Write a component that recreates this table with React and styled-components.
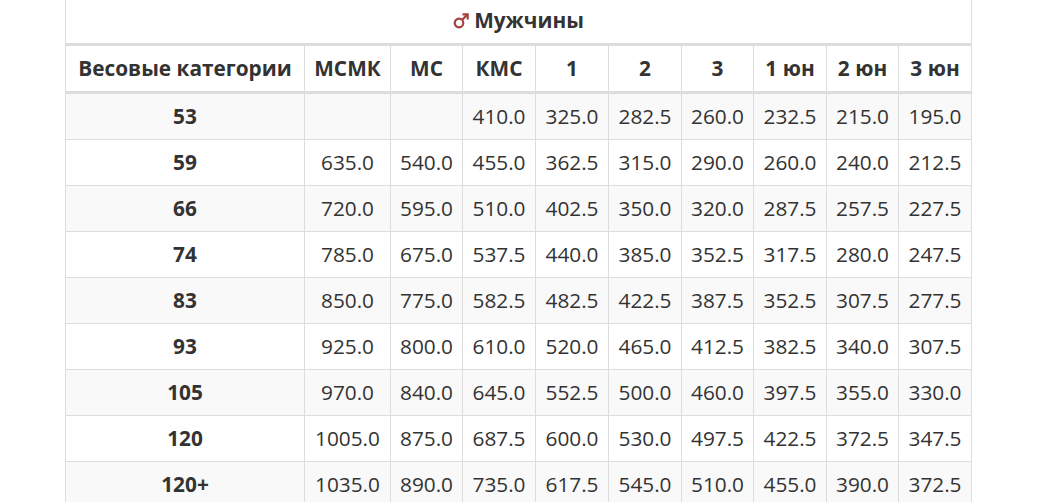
import React from "react";
import styled, { createGlobalStyle } from "styled-components";

const GlobalStyle = createGlobalStyle`
  html, body {
    margin: 0;
    padding: 0;
    background: #fff;
    overflow: hidden;
  }
  body {
    font-family: "Open Sans", "Liberation Sans", sans-serif;
    color: #333;
  }
`;

const Page = styled.div`
  padding-left: 65px;
  margin-top: -3px;
`;

const Table = styled.table`
  width: 907px;
  table-layout: fixed;
  border-collapse: collapse;
  border: 1px solid #ddd;
  font-size: 20.8px;
  line-height: 29px;
`;

const TitleCell = styled.th`
  padding: 8px;
  text-align: center;
  font-weight: 700;
  border: 1px solid #ddd;
  border-bottom: 3px solid #ddd;
`;

const Mars = styled.svg`
  width: 16px;
  height: 16px;
  margin-right: 5px;
  vertical-align: -1px;
`;

const HeadCell = styled.th`
  padding: 8px 2px;
  text-align: center;
  font-weight: 700;
  white-space: nowrap;
  border: 1px solid #ddd;
  border-bottom: 3px solid #ddd;
`;

const Row = styled.tr`
  background: ${(p) => (p.$striped ? "#f9f9f9" : "#fff")};
`;

const Cell = styled.td`
  padding: 8px 2px;
  text-align: center;
  white-space: nowrap;
  font-weight: ${(p) => (p.$bold ? 700 : 400)};
  border: 1px solid #ddd;
`;

const widths = [239, 86, 72, 73, 73, 73, 72, 73, 72, 73];
const headers = ["Весовые категории", "МСМК", "МС", "КМС", "1", "2", "3", "1 юн", "2 юн", "3 юн"];

const rows = [
  ["53", "", "", "410.0", "325.0", "282.5", "260.0", "232.5", "215.0", "195.0"],
  ["59", "635.0", "540.0", "455.0", "362.5", "315.0", "290.0", "260.0", "240.0", "212.5"],
  ["66", "720.0", "595.0", "510.0", "402.5", "350.0", "320.0", "287.5", "257.5", "227.5"],
  ["74", "785.0", "675.0", "537.5", "440.0", "385.0", "352.5", "317.5", "280.0", "247.5"],
  ["83", "850.0", "775.0", "582.5", "482.5", "422.5", "387.5", "352.5", "307.5", "277.5"],
  ["93", "925.0", "800.0", "610.0", "520.0", "465.0", "412.5", "382.5", "340.0", "307.5"],
  ["105", "970.0", "840.0", "645.0", "552.5", "500.0", "460.0", "397.5", "355.0", "330.0"],
  ["120", "1005.0", "875.0", "687.5", "600.0", "530.0", "497.5", "422.5", "372.5", "347.5"],
  ["120+", "1035.0", "890.0", "735.0", "617.5", "545.0", "510.0", "455.0", "390.0", "372.5"],
];

function MarsIcon() {
  return (
    <Mars viewBox="0 0 16 16">
      <circle cx="6" cy="10" r="4.3" fill="none" stroke="#a3413c" strokeWidth="2.2" />
      <path d="M9.2 6.8 L14 2" stroke="#a3413c" strokeWidth="2.2" fill="none" />
      <path d="M9.5 1.3 H14.7 V6.5" stroke="#a3413c" strokeWidth="2.2" fill="none" />
    </Mars>
  );
}

export default function App() {
  return (
    <Page>
      <GlobalStyle />
      <Table>
        <colgroup>
          {widths.map((w, i) => (
            <col key={i} style={{ width: w }} />
          ))}
        </colgroup>
        <thead>
          <tr>
            <TitleCell colSpan={10}>
              <MarsIcon />
              Мужчины
            </TitleCell>
          </tr>
          <tr>
            {headers.map((h) => (
              <HeadCell key={h}>{h}</HeadCell>
            ))}
          </tr>
        </thead>
        <tbody>
          {rows.map((r, i) => (
            <Row key={r[0]} $striped={i % 2 === 0}>
              {r.map((v, j) => (
                <Cell key={j} $bold={j === 0}>
                  {v}
                </Cell>
              ))}
            </Row>
          ))}
        </tbody>
      </Table>
    </Page>
  );
}
